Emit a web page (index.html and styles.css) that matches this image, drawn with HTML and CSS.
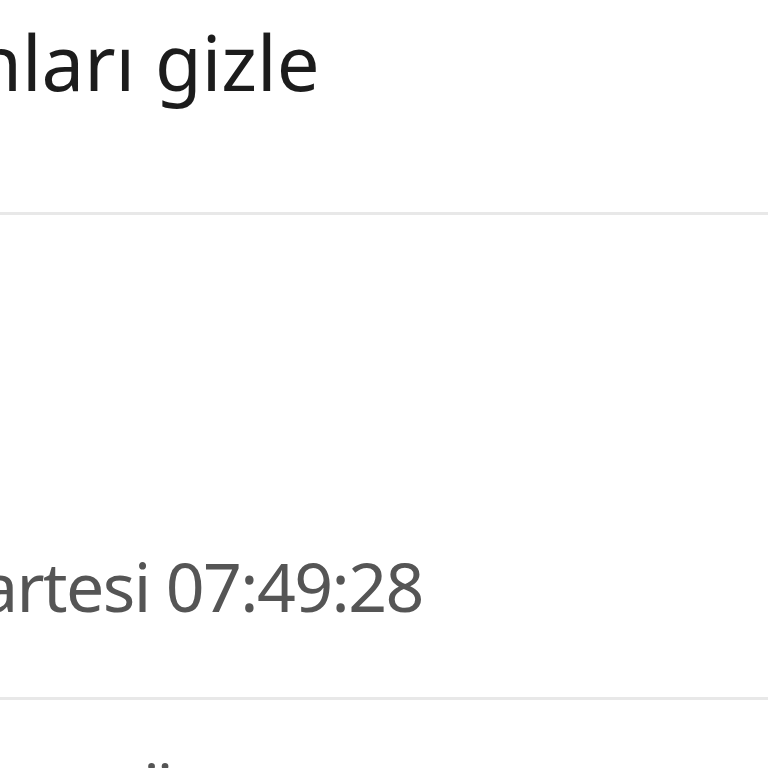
FILE: index.html
```html
<!DOCTYPE html>
<html lang="tr"><head><meta charset="utf-8"><link rel="stylesheet" href="styles.css"></head>
<body>
<div class="list">
  <div class="row row-title">
    <span class="title">nları gizle</span>
  </div>
  <div class="row row-time">
    <span class="sub">artesi 07:49:28</span>
  </div>
  <div class="row row-next">
    <span class="sub next">ü</span>
  </div>
</div>
</body></html>
```
FILE: styles.css
```css
html,body{margin:0;padding:0;background:#fff;overflow:hidden;height:768px;}
.list{display:flex;flex-direction:column;width:768px;height:768px;overflow:hidden;font-family:"Noto Sans",sans-serif;}
.row{display:flex;flex-direction:column;flex-shrink:0;border-bottom:3px solid #e8e8e8;white-space:nowrap;}
.row-title{height:200px;padding-top:12px;}
.title{font-size:76px;line-height:100px;color:#1c1c1c;margin-left:-25px;}
.row-time{height:151px;padding-top:331px;}
.sub{font-size:68px;line-height:80px;color:#555;margin-left:-20px;letter-spacing:-1.6px;}
.row-next{padding-top:47px;border-bottom:none;}
.next{margin-left:136px;font-size:72px;}
```
